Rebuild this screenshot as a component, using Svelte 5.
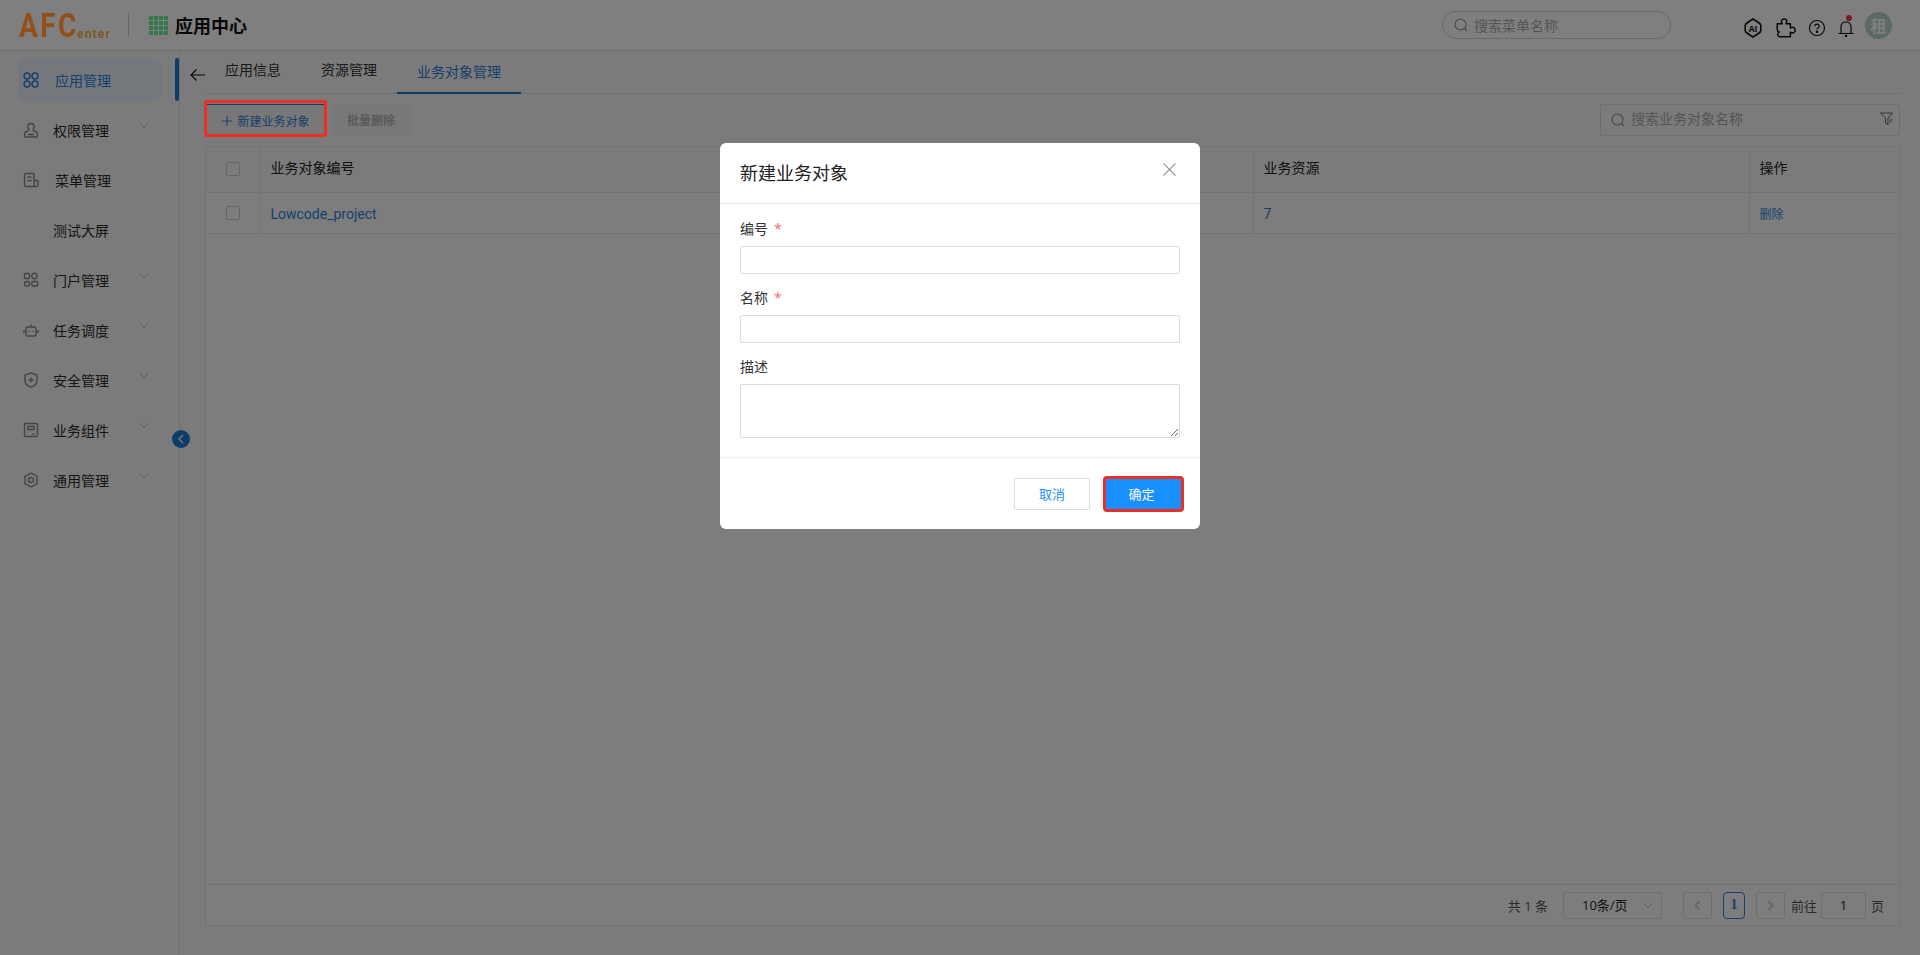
<script lang="ts">
	const circle = (cx: number, cy: number, r: number) =>
		`M${cx - r} ${cy}a${r} ${r} 0 1 0 ${2 * r} 0a${r} ${r} 0 1 0 ${-2 * r} 0`;

	const menu = [
		{
			label: '应用管理',
			active: true,
			indent: true,
			icon: [circle(4, 4, 3), circle(12, 4, 3), circle(4, 12, 3), circle(12, 12, 3)].join('')
		},
		{
			label: '权限管理',
			arrow: true,
			icon: 'M8 1.5c-2 0-3.2 1.3-3.2 3.1 0 1.5.9 2.3 1 3.4 0 .9-.9 1.1-2.2 1.5-1.4.4-2.1 1-2.1 2.2v2.3c0 .6.4 1 1 1h11c.6 0 1-.4 1-1v-2.3c0-1.2-.7-1.8-2.1-2.2-1.3-.4-2.2-.6-2.2-1.5.1-1.1 1-1.9 1-3.4 0-1.8-1.2-3.1-3.2-3.1zM5 12.5h6'
		},
		{
			label: '菜单管理',
			indent: true,
			icon: 'M11 14.5H2.5c-.6 0-1-.4-1-1v-11c0-.6.4-1 1-1H10c.6 0 1 .4 1 1v12zM11 8.5h3c.6 0 1 .4 1 1V13c0 .8-.7 1.5-1.5 1.5H11M4.5 5h4M4.5 8.5h4'
		},
		{ label: '测试大屏', icon: '' },
		{
			label: '门户管理',
			arrow: true,
			icon: `M2.2 1.5h3.6c.4 0 .7.3.7.7v3.6c0 .4-.3.7-.7.7H2.2c-.4 0-.7-.3-.7-.7V2.2c0-.4.3-.7.7-.7z${circle(11.5, 4, 2.7)}M3.5 9.5h1c1.1 0 2 .9 2 2.3s-.9 2.3-2 2.3h-1c-1.1 0-2-.9-2-2.3s.9-2.3 2-2.3zM10 9.5h3.5c.7 0 1.2.5 1.2 1.2v2.1c0 .7-.5 1.2-1.2 1.2H10c-.7 0-1.2-.5-1.2-1.2v-2.1c0-.7.5-1.2 1.2-1.2z`
		},
		{
			label: '任务调度',
			arrow: true,
			icon: 'M4.5 5h7c.8 0 1.5.7 1.5 1.5v6c0 .8-.7 1.5-1.5 1.5h-7c-.8 0-1.5-.7-1.5-1.5v-6C3 5.7 3.7 5 4.5 5zM8 5V2.5M1 8v3M15 8v3M6 9v1M10 9v1'
		},
		{
			label: '安全管理',
			arrow: true,
			icon: 'M8 1l6 2v6c0 3-2.5 5-6 6.2C4.5 14 2 12 2 9V3zM8 5.5v5M5.5 8h5'
		},
		{
			label: '业务组件',
			arrow: true,
			icon: 'M2.5 1.5h11c.6 0 1 .4 1 1v11c0 .6-.4 1-1 1h-11c-.6 0-1-.4-1-1v-11c0-.6.4-1 1-1zM5 4.5h6v3H5zM9.500 12h2'
		},
		{
			label: '通用管理',
			arrow: true,
			icon: `M8 1l6 3.5v7L8 15l-6-3.5v-7z${circle(8, 8, 2.5)}`
		}
	];
</script>

<div class="app">
	<header class="topbar">
		<div class="logo">
			<span class="logo-main">AFC</span><span class="logo-sub">enter</span>
		</div>
		<span class="divider"></span>
		<span class="grid-mark">
			{#each Array(16) as _}
				<i></i>
			{/each}
		</span>
		<h1 class="app-title">应用中心</h1>

		<label class="top-search">
			<svg width="14" height="14" viewBox="0 0 14 14" fill="none" stroke="currentColor" stroke-width="1.1"><circle cx="6.5" cy="6.5" r="5.5" /><path d="M10.5 10.5l2.5 2.5" /></svg>
			<input placeholder="搜索菜单名称" />
		</label>

		<div class="top-icons">
			<svg class="ai" width="20" height="20" viewBox="0 0 20 20" fill="none" stroke="currentColor" stroke-width="1.6"><path d="M6 3.5L10 1l4 2.5M17.8 6.5v7M14 16.500L10 19l-4-2.500M2.2 13.500v-7" /><path d="M14 3.5l3.800 3M14 16.500l3.800-3M6 16.500l-3.800-3M6 3.500l-3.800 3" /><text x="10" y="13.5" text-anchor="middle" class="ai-text">AI</text></svg>
			<svg width="20" height="20" viewBox="2.5 2 15 16" fill="none" stroke="currentColor" stroke-width="1.2" stroke-linejoin="round"><path d="M3 6.5h4c-.8-1.2-.8-2.2-.2-3 .8-1 2.7-1 3.5 0 .6.8.5 1.800-.3 3h3.500V10c1.200-.7 2.300-.7 3.200 0 .9.900.9 2.600 0 3.400-.9.700-2 .700-3.200 0V17H5.500c-1.200 0-2.200-1-2.200-2.100 0-.9.600-1.400 1.400-1.700-.9-.3-1.700-.9-1.700-1.900z" /></svg>
			<svg width="18" height="18" viewBox="0 0 18 18" fill="none" stroke="currentColor" stroke-width="1.2"><circle cx="9" cy="9" r="7.5" /><path d="M6.8 7.2c0-1.3 1-2.1 2.2-2.1s2.2.8 2.2 2c0 1.8-2.2 1.7-2.2 3.5" /><circle cx="9" cy="12.8" r=".6" fill="currentColor" /></svg>
			<span class="bell">
				<svg width="16" height="18" viewBox="0 0 16 18" fill="none" stroke="currentColor" stroke-width="1.2"><path d="M3 14V8c0-3 2-5 5-5s5 2 5 5v6M.5 14.5h15" /><circle cx="8" cy="17" r=".7" fill="currentColor" /></svg>
				<i class="dot"></i>
			</span>
			<span class="avatar">租</span>
		</div>
	</header>

	<div class="body">
		<aside class="sidebar">
			<ul>
				{#each menu as item}
					<li class="menu-item" class:active={item.active} class:indent={item.indent}>
						<span class="menu-icon">
							{#if item.icon}
								<svg width="16" height="16" viewBox="0 0 16 16" fill="none" stroke="currentColor" stroke-width="1.4"><path d={item.icon} /></svg>
							{/if}
						</span>
						<span>{item.label}</span>
						{#if item.arrow}
							<svg class="chevron" width="10" height="6" viewBox="0 0 10 6" fill="none" stroke="currentColor"><path d="M1 .5l4 4 4-4" /></svg>
						{/if}
					</li>
				{/each}
			</ul>
		</aside>

		<main class="main">
			<span class="side-mark"></span>
			<button class="collapse" aria-label="收起">
				<svg width="6" height="10" viewBox="0 0 6 10" fill="none" stroke="currentColor" stroke-width="1.2"><path d="M5 1L1 5l4 4" /></svg>
			</button>

			<nav class="tabs">
				<svg class="back" width="16" height="12" viewBox="0 0 16 12" fill="none" stroke="currentColor" stroke-width="1.1"><path d="M15 6H1M6.5 .5L1 6l5.5 5.5" /></svg>
				<span class="tab">应用信息</span>
				<span class="tab">资源管理</span>
				<span class="tab current">业务对象管理</span>
			</nav>

			<div class="toolbar">
				<button class="btn-new">
					<svg width="10" height="10" viewBox="0 0 10 10" stroke="currentColor"><path d="M5 0v10M0 5h10" /></svg>
					新建业务对象
				</button>
				<button class="btn-batch" disabled>批量删除</button>
				<label class="obj-search">
					<svg width="14" height="14" viewBox="0 0 14 14" fill="none" stroke="currentColor" stroke-width="1.1"><circle cx="6.5" cy="6.5" r="5.5" /><path d="M10.5 10.5l2.5 2.5" /></svg>
					<input placeholder="搜索业务对象名称" />
					<svg class="filter" width="13" height="14" viewBox="0 0 13 14" fill="none" stroke="currentColor"><path d="M.5 1h12L8 6v6.5L5.5 11V6zM9.5 8h3M9.5 10h2" /></svg>
				</label>
			</div>

			<section class="table-box">
				<div class="table-scroll">
					<table>
						<colgroup>
							<col style="width: 54px" />
							<col style="width: 993px" />
							<col style="width: 496px" />
							<col />
						</colgroup>
						<thead>
							<tr>
								<th class="check"><span class="checkbox"></span></th>
								<th>业务对象编号</th>
								<th>业务资源</th>
								<th>操作</th>
							</tr>
						</thead>
						<tbody>
							<tr>
								<td class="check"><span class="checkbox"></span></td>
								<td><span class="link">Lowcode_project</span></td>
								<td><span class="link">7</span></td>
								<td><span class="link small">删除</span></td>
							</tr>
						</tbody>
					</table>
				</div>

				<footer class="pager">
					<span class="total">共 1 条</span>
					<span class="page-size">
						10条/页
						<svg width="10" height="6" viewBox="0 0 10 6" fill="none" stroke="currentColor"><path d="M1 .5l4 4 4-4" /></svg>
					</span>
					<span class="page-btn"><svg width="7" height="11" viewBox="0 0 6 10" fill="none" stroke="currentColor" stroke-width="1.8"><path d="M5 1L1 5l4 4" /></svg></span>
					<span class="page-num">1</span>
					<span class="page-btn"><svg width="7" height="11" viewBox="0 0 6 10" fill="none" stroke="currentColor" stroke-width="1.8"><path d="M1 1l4 4-4 4" /></svg></span>
					<span class="goto">前往</span>
					<input class="page-input" value="1" />
					<span class="goto-end">页</span>
				</footer>
			</section>
		</main>
	</div>

	<div class="mask">
		<div class="dialog">
			<div class="dialog-head">
				<h2>新建业务对象</h2>
				<svg class="close" width="13" height="13" viewBox="0 0 13 13" stroke="currentColor" stroke-width="1.1"><path d="M.5 .5l12 12M12.5 .5l-12 12" /></svg>
			</div>
			<form class="dialog-body">
				<label class="req" for="f-code">编号</label>
				<input id="f-code" />
				<label class="req" for="f-name">名称</label>
				<input id="f-name" />
				<label for="f-desc">描述</label>
				<textarea id="f-desc"></textarea>
			</form>
			<div class="dialog-foot">
				<button class="btn-cancel">取消</button>
				<button class="btn-ok">确定</button>
			</div>
		</div>
	</div>

	<span class="callout"></span>
</div>

<style>
	:global(body) {
		margin: 0;
		background: #f6f6f6;
		font-family: 'Open Sans', 'Noto Sans CJK SC', sans-serif;
		font-size: 14px;
		color: #333;
	}

	input,
	textarea,
	button {
		font: inherit;
	}

	.app {
		position: relative;
		display: flex;
		flex-direction: column;
		height: 955px;
		overflow: hidden;
	}

	.topbar {
		display: flex;
		align-items: center;
		flex: none;
		height: 50px;
		padding-left: 19px;
		background: #fff;
		border-bottom: 1px solid #ddd;
	}

	.logo {
		position: relative;
		z-index: 20;
		display: flex;
		align-items: flex-end;
		width: 92px;
		height: 30px;
		font-family: Roboto, sans-serif;
		white-space: nowrap;
	}

	.logo-main {
		width: 59px;
		font-size: 34px;
		font-weight: 700;
		line-height: 30px;
		letter-spacing: 3px;
		color: #944f18;
		transform: scaleX(0.82);
		transform-origin: left;
	}

	.logo-sub {
		margin-left: -1px;
		font-size: 12px;
		font-weight: 700;
		line-height: 12px;
		letter-spacing: 1.2px;
		color: #7a5a20;
	}

	.divider {
		width: 1px;
		height: 24px;
		margin: 0 20px 0 17px;
		background: #ccc;
	}

	.grid-mark {
		position: relative;
		z-index: 20;
		display: grid;
		grid-template-columns: repeat(4, 4px);
		gap: 1px;
		margin-right: 7px;
	}

	.grid-mark i {
		height: 4px;
		background: #34784a;
	}

	.app-title {
		margin: 0;
		font-size: 18px;
		font-weight: 700;
		color: #111;
	}

	.top-search {
		display: flex;
		align-items: center;
		gap: 6px;
		box-sizing: border-box;
		width: 229px;
		height: 28px;
		margin-left: auto;
		padding-left: 11px;
		border: 1px solid #d3d3d3;
		border-radius: 14px;
		color: #888;
	}

	.top-search input,
	.obj-search input {
		flex: 1;
		min-width: 0;
		padding: 0;
		border: 0;
		outline: 0;
		background: none;
	}

	.obj-search input {
		padding-bottom: 3px;
	}

	input::placeholder {
		color: #aaa;
	}

	.top-icons {
		display: flex;
		align-items: center;
		margin: 0 28px 0 72px;
		color: #111;
	}

	.ai-text {
		font-family: 'Open Sans', sans-serif;
		font-size: 8.5px;
		font-weight: 700;
		fill: currentColor;
		stroke: none;
	}

	.top-icons svg {
		display: block;
		margin-top: 5px;
	}

	.ai {
		margin-right: 13px;
	}

	.top-icons svg:nth-child(2) {
		margin-right: 12px;
	}

	.top-icons svg:nth-child(3) {
		margin-right: 12px;
	}

	.bell {
		position: relative;
		margin-right: 11px;
	}

	.dot {
		position: absolute;
		top: 1px;
		right: 2px;
		width: 6px;
		height: 6px;
		border-radius: 50%;
		background: #f03a3a;
	}

	.avatar {
		display: grid;
		place-items: center;
		width: 27px;
		height: 27px;
		border-radius: 50%;
		background: #b3d2cb;
		color: #fff;
		font-weight: 700;
		font-size: 16px;
	}

	.body {
		display: flex;
		flex: 1;
		min-height: 0;
	}

	.sidebar {
		flex: none;
		box-sizing: border-box;
		width: 180px;
		padding: 4px 17px 0 18px;
		border-right: 1px solid #e0e0e0;
	}

	.sidebar ul {
		margin: 0;
		padding: 0;
		list-style: none;
	}

	.menu-item {
		position: relative;
		display: flex;
		align-items: center;
		height: 50px;
		padding-left: 5px;
		gap: 14px;
		color: #2b2b2b;
		box-sizing: border-box;
	}

	.menu-item.indent {
		gap: 16px;
	}

	.menu-item.active {
		margin: 4px 0;
		height: 42px;
		border-radius: 6px;
		background: #e8f1fb;
		color: #2f7fd6;
	}

	.menu-icon {
		display: flex;
		width: 16px;
		height: 16px;
		color: #888;
	}

	.active .menu-icon {
		color: #2f7fd6;
	}

	.chevron {
		position: absolute;
		left: 121px;
		top: 18px;
		color: #aaa;
	}

	.main {
		position: relative;
		display: flex;
		flex: 1;
		flex-direction: column;
		min-width: 0;
		padding: 0 20px 29px 25px;
	}

	.side-mark {
		position: absolute;
		left: -5px;
		top: 7px;
		width: 4px;
		height: 43px;
		border-radius: 2px;
		background: #1a78d6;
	}

	.collapse {
		position: absolute;
		left: -8px;
		top: 379px;
		display: grid;
		place-items: center;
		width: 18px;
		height: 18px;
		padding: 0;
		border: 0;
		border-radius: 50%;
		background: #1a78d6;
		color: #fff;
	}

	.tabs {
		display: flex;
		align-items: flex-end;
		flex: none;
		height: 42px;
		padding-left: 1px;
		border-bottom: 1px solid #ddd;
	}

	.back {
		margin: 0 -1px 12px -16px;
		color: #111;
		flex: none;
	}

	.tab {
		padding: 0 20px;
		height: 40px;
		line-height: 34px;
		box-sizing: border-box;
		color: #333;
	}

	.tab.current {
		margin-bottom: -1px;
		border-bottom: 2px solid #1a78d6;
		color: #2f7fd6;
		line-height: 36px;
	}

	.toolbar {
		display: flex;
		align-items: center;
		flex: none;
		height: 32px;
		margin: 10px 0;
	}

	.btn-new {
		display: flex;
		align-items: center;
		justify-content: center;
		gap: 5px;
		width: 122px;
		height: 32px;
		padding: 0;
		border: 0;
		border-top: 1px solid #1a78d6;
		background: #f0f0f0;
		color: #2f7fd6;
		font-size: 12px;
	}

	.btn-batch {
		width: 80px;
		height: 31px;
		margin-left: 4px;
		padding: 0;
		border: 1px solid #eee;
		border-radius: 2px;
		background: #f0f0f0;
		color: #b4b4b4;
		font-size: 12px;
		font-weight: 700;
	}

	.obj-search {
		display: flex;
		align-items: center;
		gap: 6px;
		box-sizing: border-box;
		width: 300px;
		height: 32px;
		margin-left: auto;
		padding: 0 6px 0 10px;
		border: 1px solid #dcdcdc;
		border-radius: 2px;
		color: #888;
	}

	.filter {
		margin-top: -2px;
		color: #666;
	}

	.table-box {
		display: flex;
		flex: 1;
		flex-direction: column;
		min-height: 0;
		border: 1px solid #e6e6e6;
		background: #fbfbfb;
	}

	.table-scroll {
		flex: 1;
		min-height: 0;
	}

	table {
		width: 100%;
		table-layout: fixed;
		border-collapse: collapse;
	}

	th,
	td {
		padding: 0 10px;
		text-align: left;
		font-weight: 400;
		border-bottom: 1px solid #e6e6e6;
		border-right: 1px solid #e6e6e6;
		color: #222;
	}

	th:last-child,
	td:last-child {
		border-right: 0;
	}

	th {
		height: 45px;
		padding-bottom: 4px;
		box-sizing: border-box;
		background: #f7f7f7;
	}

	td {
		height: 39px;
		padding-top: 1px;
	}

	.check {
		padding: 0 0 0 20px;
	}

	.checkbox {
		display: block;
		box-sizing: border-box;
		width: 14px;
		height: 14px;
		border: 1px solid #ccc;
		border-radius: 2px;
		background: #fafafa;
	}

	.link {
		color: #2f7fd6;
		font-family: Roboto, 'Noto Sans CJK SC', sans-serif;
	}

	.link.small {
		font-size: 12px;
	}

	.pager {
		display: flex;
		align-items: center;
		flex: none;
		height: 40px;
		padding-right: 15px;
		border-top: 1px solid #e6e6e6;
		justify-content: flex-end;
		font-size: 13px;
		color: #555;
	}

	.total {
		margin-right: 15px;
	}

	.page-size {
		position: relative;
		box-sizing: border-box;
		width: 99px;
		height: 27px;
		margin-right: 21px;
		padding-left: 18px;
		line-height: 25px;
		border: 1px solid #ddd;
		border-radius: 2px;
		color: #222;
	}

	.page-size svg {
		position: absolute;
		right: 8px;
		top: 10px;
		color: #aaa;
	}

	.page-btn {
		display: grid;
		place-items: center;
		box-sizing: border-box;
		width: 29px;
		height: 27px;
		border: 1px solid #ddd;
		border-radius: 2px;
		color: #ccc;
	}

	.page-num {
		display: grid;
		place-items: center;
		box-sizing: border-box;
		width: 22px;
		height: 27px;
		margin: 0 11px;
		border: 1px solid #2f7fd6;
		border-radius: 4px;
		color: #2f7fd6;
		font-size: 14px;
		font-weight: 700;
		font-family: 'Liberation Serif', serif;
	}

	.goto {
		margin: 0 4px 0 6px;
	}

	.page-input {
		box-sizing: border-box;
		width: 45px;
		height: 27px;
		padding: 0;
		border: 1px solid #ddd;
		border-radius: 2px;
		outline: 0;
		background: none;
		text-align: center;
		color: #222;
	}

	.goto-end {
		margin-left: 5px;
	}

	.mask {
		position: fixed;
		inset: 0;
		z-index: 10;
		background: rgba(0, 0, 0, 0.5);
	}

	.dialog {
		box-sizing: border-box;
		width: 480px;
		height: 386px;
		margin: 143px auto 0;
		border-radius: 6px;
		background: #fff;
	}

	.dialog-head {
		display: flex;
		align-items: center;
		justify-content: space-between;
		box-sizing: border-box;
		height: 61px;
		padding: 0 24px 3px 20px;
		border-bottom: 1px solid #e8e8e8;
	}

	.dialog-head h2 {
		margin: 0;
		font-size: 18px;
		font-weight: 400;
		color: #222;
	}

	.close {
		margin-top: -4px;
		color: #999;
	}

	.dialog-body {
		display: flex;
		flex-direction: column;
		height: 254px;
		box-sizing: border-box;
		padding: 15px 20px 0;
		border-bottom: 1px solid #eee;
	}

	.dialog-body label {
		height: 20px;
		line-height: 20px;
		margin-bottom: 7px;
		color: #333;
	}

	.req::after {
		content: '*';
		margin-left: 6px;
		color: #f56c6c;
	}

	.dialog-body input,
	.dialog-body textarea {
		box-sizing: border-box;
		flex: none;
		width: 100%;
		height: 28px;
		margin-bottom: 14px;
		padding: 0 8px;
		border: 1px solid #dcdcdc;
		border-radius: 2px;
		outline: 0;
	}

	.dialog-body textarea {
		height: 54px;
	}

	.dialog-foot {
		display: flex;
		justify-content: flex-end;
		gap: 15px;
		padding: 20px 18px 0 0;
	}

	.btn-cancel {
		width: 76px;
		height: 32px;
		padding: 0 0 2px;
		border: 1px solid #dcdcdc;
		border-radius: 2px;
		background: #fff;
		color: #1890ff;
		font-size: 13px;
	}

	.btn-ok {
		width: 77px;
		height: 32px;
		padding: 0 4px 2px 0;
		border: 0;
		border-radius: 2px;
		background: #1890ff;
		color: #fff;
		font-size: 13px;
		outline: 3px solid #ee2e24;
		outline-offset: -1px;
	}

	.callout {
		position: absolute;
		left: 204px;
		top: 100px;
		z-index: 20;
		box-sizing: border-box;
		width: 123px;
		height: 37px;
		border: 3px solid #ee2e24;
		border-radius: 3px;
	}
</style>
